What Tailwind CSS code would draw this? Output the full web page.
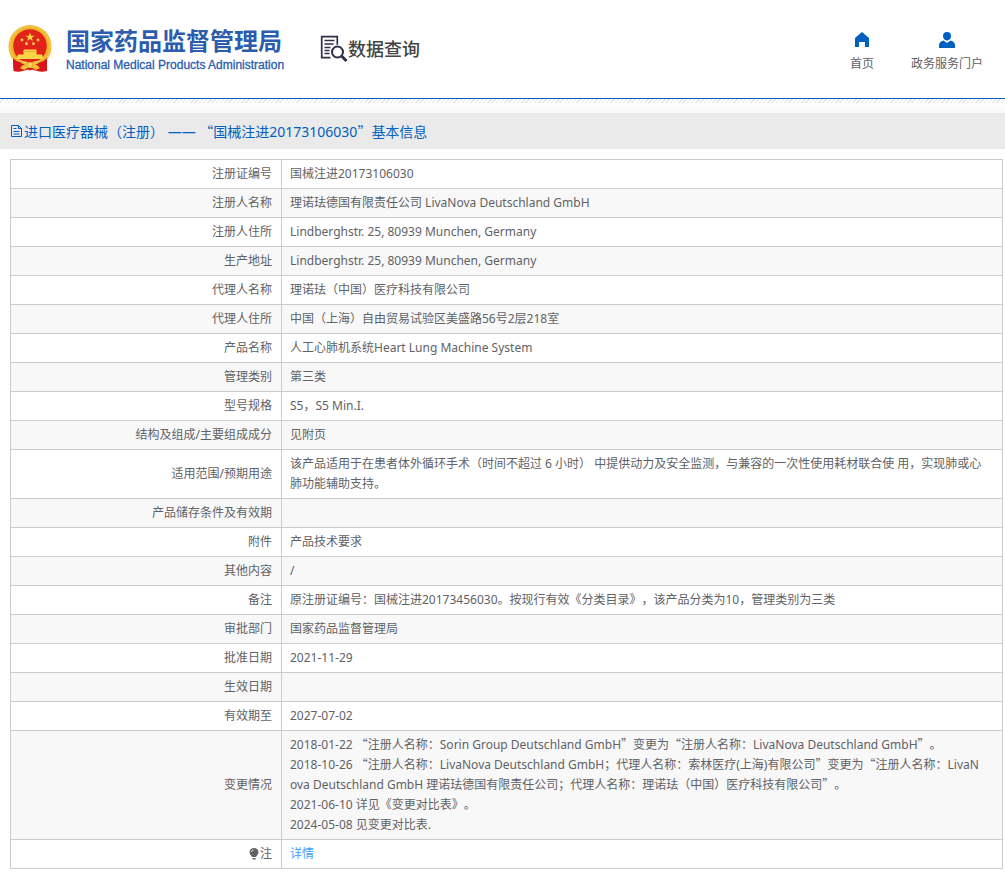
<!DOCTYPE html>
<html lang="zh-CN">
<head>
<meta charset="utf-8">
<meta name="viewport" content="width=device-width, initial-scale=1">
<title>国家药品监督管理局 数据查询</title>
<script src="https://cdn.jsdelivr.net/npm/@tailwindcss/browser@4"></script>
</head>
<body class="bg-white text-xs text-[#606266] font-['Noto_Sans','Noto_Sans_CJK_SC',sans-serif] [text-spacing-trim:space-all]">
<header class="flex h-[99px] items-center justify-between border-b border-[#0060c0] pl-2 pr-[22px]">
  <div class="flex items-center">
    <a href="#" class="flex items-center gap-3.5" aria-label="国家药品监督管理局">
      <svg class="h-12 w-11" viewBox="0 0 44 48" aria-hidden="true">
        <path d="M5 30 L5.500 46 Q10 47.500 15 46 L22 44 L29 46 Q34 47.500 39 46 L39 30 Z" fill="#d8161b"/>
        <ellipse cx="22" cy="21.500" rx="21.500" ry="21.500" fill="#eeb62c"/>
        <ellipse cx="22" cy="21.500" rx="20" ry="20" fill="none" stroke="#f8d559" stroke-width="1.200" stroke-dasharray="1.500 1"/>
        <circle cx="22" cy="21" r="16.800" fill="#e2231a"/>
        <g fill="#f9d648">
          <path d="M22 7.500l1.100 3.300h3.500l-2.800 2 1.100 3.300-2.900-2-2.900 2 1.100-3.300-2.800-2h3.500z"/>
          <circle cx="14" cy="15" r="1.400"/><circle cx="30" cy="15" r="1.400"/>
          <circle cx="18.500" cy="18.700" r="1.400"/><circle cx="25.500" cy="18.700" r="1.400"/>
          <path d="M16 24.500h12l1.200 2.300H14.800zM15.500 27h13v2.500h-13zM10 29.500h24l1.500 4.500h-27z"/>
        </g>
        <path d="M5 33 Q10 38 16 37.500 L22 40 L28 37.500 Q34 38 39 33 L38.500 44 Q33 45 28 42.500 L22 45.500 L16 42.500 Q11 45 5.500 44Z" fill="#d8161b"/>
        <path d="M11 35.500 Q17 35 22 38.500 Q27 35 33 35.500 L30 38.500 Q26 38.500 22 42 Q18 38.500 14 38.500Z" fill="#f3c443"/>
        <path d="M12 43 Q16 38 22 38 Q28 38 32 43 L28 45 Q22 40 16 45Z" fill="#f0bd35"/>
        <circle cx="22" cy="40" r="2.800" fill="#f8d559" stroke="#d99a20" stroke-width=".6"/>
      </svg>
      <span class="flex flex-col pt-1 text-[#2b5cad]">
        <span class="text-2xl leading-7 font-bold">国家药品监督管理局</span>
        <span class="font-['Liberation_Sans',sans-serif] text-xs leading-5 [-webkit-text-stroke:0.3px_#2b5cad]">National Medical Products Administration</span>
      </span>
    </a>
    <a href="#" class="ml-9 flex items-center text-[#444]">
      <svg class="h-7 w-7" viewBox="0 0 28 28" fill="none" stroke="#302e48" aria-hidden="true">
        <path d="M10.500 22.700H1.700V1.700h15.600v8" stroke-width="1.700"/>
        <path d="M4.500 5.500h10M4.500 9h9M4.500 12.500h6M4.500 15.500h5M4.500 18.500h5" stroke-width="1.300"/>
        <circle cx="17.500" cy="17" r="5.500" stroke-width="2"/>
        <path d="M21.500 21l5 5" stroke-width="3"/>
      </svg>
      <span class="text-lg leading-6 font-medium">数据查询</span>
    </a>
  </div>
  <nav class="flex gap-[37px] pt-2 leading-5">
    <a href="#" class="flex flex-col items-center gap-1.5">
      <svg class="h-4 w-4" viewBox="0 0 16 16" aria-hidden="true"><path d="M8 0l7 6v9h-4v-5H5v5H1V6z" fill="#0060c0"/></svg>
      首页
    </a>
    <a href="#" class="flex flex-col items-center gap-1.5">
      <svg class="h-4 w-4" viewBox="0 0 16 16" aria-hidden="true"><path d="M8 0a4 4.200 0 0 1 4 4.200C12 6.800 10 8.500 8 8.500S4 6.800 4 4.200A4 4.200 0 0 1 8 0zM4.500 8.500L8 11l3.500-2.500c3 .8 4.500 2.500 4.500 5V16H0v-2.500c0-2.500 1.500-4.200 4.500-5z" fill="#0060c0"/></svg>
      政务服务门户
    </a>
  </nav>
</header>
<div class="h-1 bg-[repeating-linear-gradient(135deg,#fff_0px,#fff_2px,#e4e4e4_2px,#e4e4e4_3px)]"></div>
<div class="h-2.5 bg-linear-to-b from-white to-[#f8f8f8]"></div>
<main>
  <h1 class="flex h-9 items-center bg-[#eaeaea] pl-2.5 text-sm text-[#0060c0]">
    <svg class="mr-px h-3.5 w-[13px]" viewBox="0 0 13 14" fill="none" stroke="#0060c0" aria-hidden="true"><path d="M1.500 1.500h7l3 3v8h-10zM8.500 1.500v3h3M3.500 4.500h3M3.500 7.500h6M3.500 10h6"/></svg>
    <span>进口医疗器械（注册） —— <span class="font-['Noto_Sans_CJK_SC',sans-serif]">“</span>国械注进20173106030<span class="font-['Noto_Sans_CJK_SC',sans-serif]">”</span>基本信息</span>
  </h1>
  <div class="pt-2.5 pr-0.5 pl-2.5">
    <table class="w-full table-fixed border-collapse leading-5 break-all [&_td]:border [&_td]:border-[#ccc] [&_td]:py-1 [&_td]:pr-3 [&_td]:pl-2 [&_th]:border [&_th]:border-[#ccc] [&_th]:py-1 [&_th]:pr-[9px] [&_th]:pl-2 [&_th]:text-right [&_th]:font-normal [&_tr:nth-child(even)]:bg-[#f8f8f8]">
      <colgroup><col class="w-[271px]"><col></colgroup>
      <tbody>
        <tr><th scope="row">注册证编号</th><td>国械注进20173106030</td></tr>
        <tr><th scope="row">注册人名称</th><td>理诺珐德国有限责任公司 LivaNova Deutschland GmbH</td></tr>
        <tr><th scope="row">注册人住所</th><td>Lindberghstr. 25, 80939 Munchen, Germany</td></tr>
        <tr><th scope="row">生产地址</th><td>Lindberghstr. 25, 80939 Munchen, Germany</td></tr>
        <tr><th scope="row">代理人名称</th><td>理诺珐（中国）医疗科技有限公司</td></tr>
        <tr><th scope="row">代理人住所</th><td>中国（上海）自由贸易试验区美盛路56号2层218室</td></tr>
        <tr><th scope="row">产品名称</th><td>人工心肺机系统Heart Lung Machine System</td></tr>
        <tr><th scope="row">管理类别</th><td>第三类</td></tr>
        <tr><th scope="row">型号规格</th><td>S5，S5 Min.I.</td></tr>
        <tr><th scope="row">结构及组成/主要组成成分</th><td>见附页</td></tr>
        <tr><th scope="row">适用范围/预期用途</th><td>该产品适用于在患者体外循环手术（时间不超过 6 小时） 中提供动力及安全监测，与兼容的一次性使用耗材联合使 用，实现肺或心肺功能辅助支持。</td></tr>
        <tr><th scope="row">产品储存条件及有效期</th><td></td></tr>
        <tr><th scope="row">附件</th><td>产品技术要求</td></tr>
        <tr><th scope="row">其他内容</th><td>/</td></tr>
        <tr><th scope="row">备注</th><td>原注册证编号：国械注进20173456030。按现行有效《分类目录》，该产品分类为10，管理类别为三类</td></tr>
        <tr><th scope="row">审批部门</th><td>国家药品监督管理局</td></tr>
        <tr><th scope="row">批准日期</th><td>2021-11-29</td></tr>
        <tr><th scope="row">生效日期</th><td></td></tr>
        <tr><th scope="row">有效期至</th><td>2027-07-02</td></tr>
        <tr class="[&_td_span]:font-['Noto_Sans_CJK_SC',sans-serif] [&_td_span]:leading-none"><th scope="row">变更情况</th><td>2018-01-22 <span>“</span>注册人名称：Sorin Group Deutschland GmbH<span>”</span>变更为<span>“</span>注册人名称：LivaNova Deutschland GmbH<span>”</span>。<br>2018-10-26 <span>“</span>注册人名称：LivaNova Deutschland GmbH；代理人名称：索林医疗(上海)有限公司<span>”</span>变更为<span>“</span>注册人名称：LivaN<br>ova Deutschland GmbH 理诺珐德国有限责任公司；代理人名称：理诺珐（中国）医疗科技有限公司<span>”</span>。<br>2021-06-10 详见《变更对比表》。<br>2024-05-08 见变更对比表.</td></tr>
        <tr><th scope="row"><span class="flex items-center justify-end"><svg class="h-3 w-3" viewBox="0 0 12 12" aria-hidden="true"><path d="M6 0a4.500 4.200 0 0 1 4.500 4.200C10.500 6.500 8.500 7.500 8 9H4C3.500 7.500 1.500 6.500 1.500 4.200A4.500 4.200 0 0 1 6 0zM4.500 10h3v1.500h-3z" fill="#606266"/><path d="M3.500 4a2 2 0 0 1 2-2" stroke="#fff" stroke-width=".8" fill="none"/></svg>注</span></th><td><a href="#" class="text-[#409eff]">详情</a></td></tr>
      </tbody>
    </table>
  </div>
</main>
</body>
</html>
